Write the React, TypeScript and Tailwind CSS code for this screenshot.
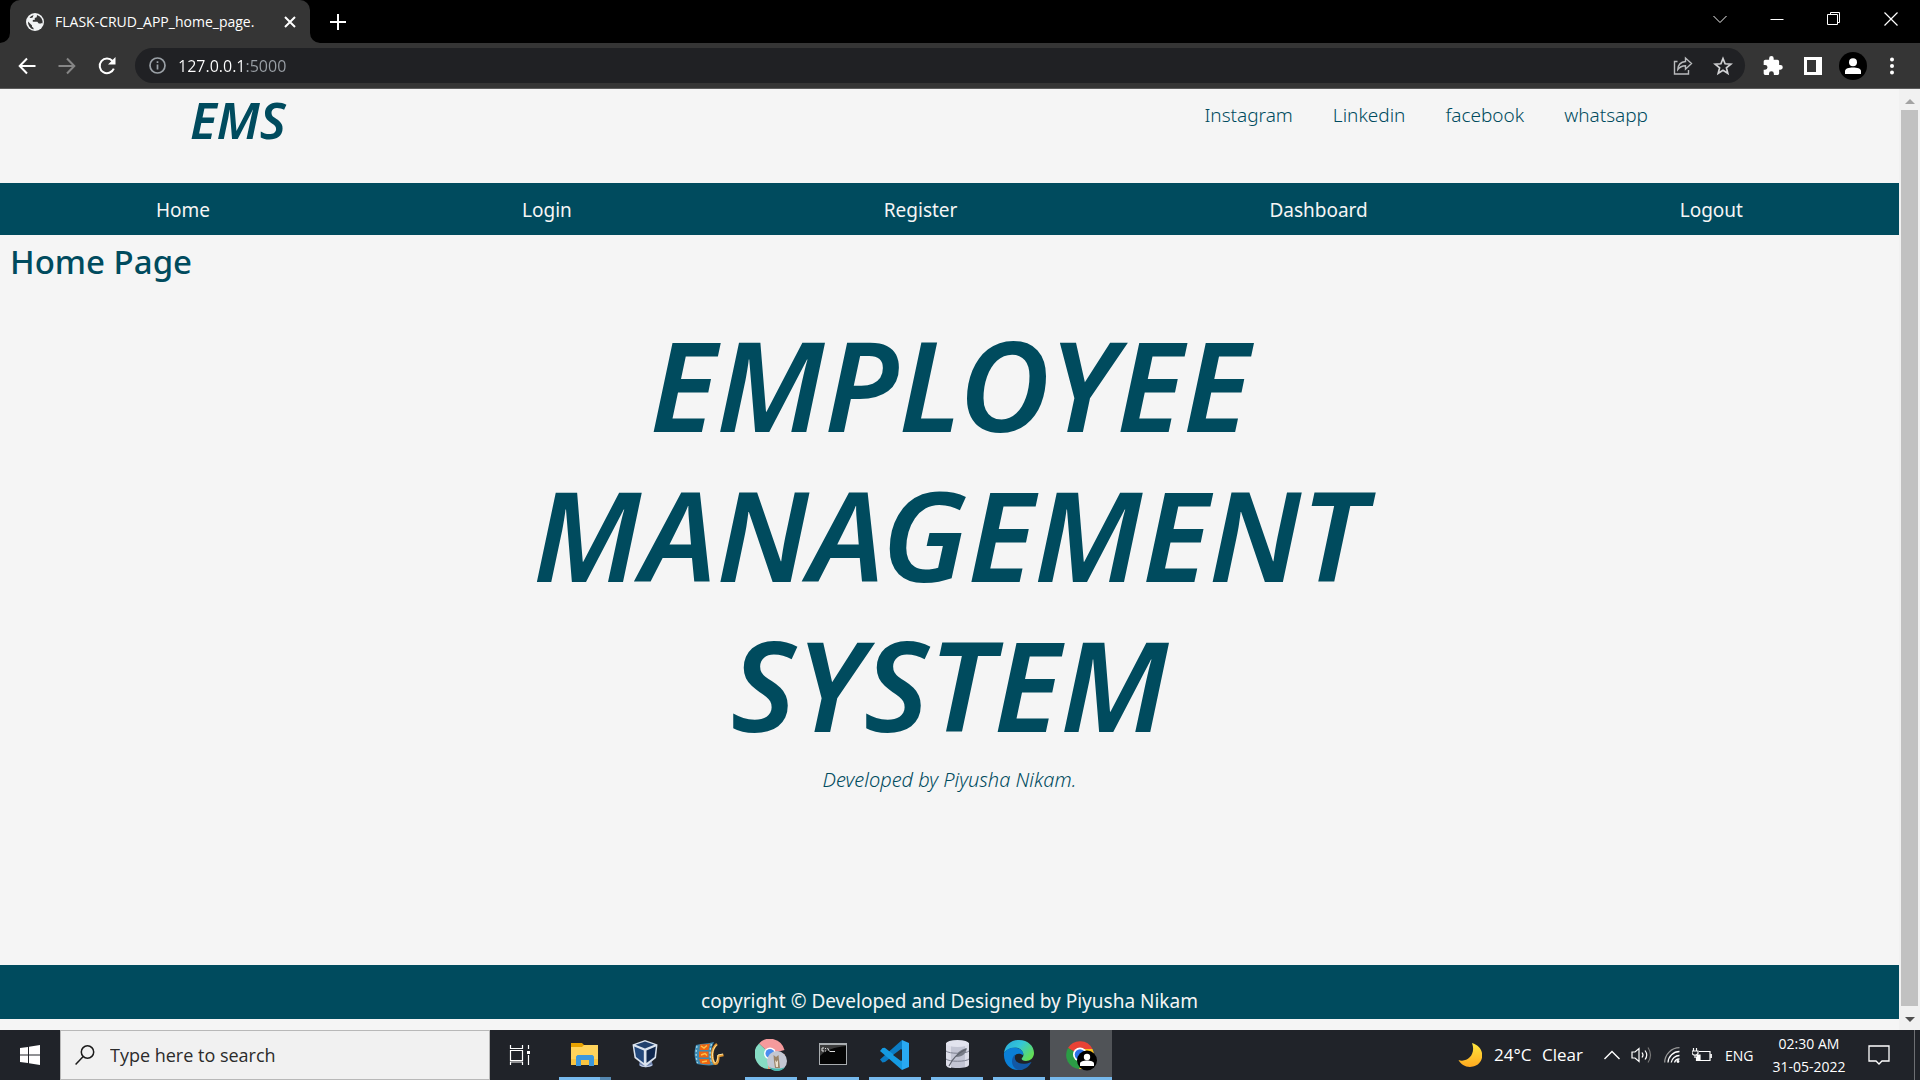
import type { ReactNode } from "react";

const social = ["Instagram", "Linkedin", "facebook", "whatsapp"];
const sections = ["Home", "Login", "Register", "Dashboard", "Logout"];

function Globe() {
  return (
    <svg viewBox="0 0 18 18" className="h-[18px] w-[18px] shrink-0">
      <circle cx="9" cy="9" r="9" fill="#f1f3f4" />
      <path d="M2 8.500 6 12.500v1.200l1.500 1.300v1.500A7.600 7.600 0 0 1 2 8.500zM11 2l-.3 2.200-2 .8.2 1.700-2.100.3v1.800h4.500l1.500 1.800h2.300l.8-.6.6.5a7.500 7.500 0 0 0-5.500-8.500zM3.500 4.800 5 3.200 7.500 2l-.8 2.400L5 5z" fill="#353535" />
    </svg>
  );
}

function ToolButton({ label, className = "", children }: { label: string; className?: string; children: ReactNode }) {
  return (
    <button aria-label={label} className={`flex shrink-0 items-center justify-center ${className}`}>
      {children}
    </button>
  );
}

function TabStrip() {
  return (
    <div className="flex h-[43px] shrink-0 bg-black">
      <div className="relative ml-[10px] flex w-[300px] items-center rounded-t-[10px] bg-[#353535] pl-4 pr-[14px]">
        <svg viewBox="0 0 10 10" className="absolute -left-[10px] bottom-0 h-[10px] w-[10px]"><path d="M10 0v10H0A10 10 0 0 0 10 0z" fill="#353535" /></svg>
        <svg viewBox="0 0 10 10" className="absolute -right-[10px] bottom-0 h-[10px] w-[10px]"><path d="M0 0v10h10A10 10 0 0 1 0 0z" fill="#353535" /></svg>
        <Globe />
        <span className="ml-[11px] flex-1 whitespace-nowrap text-[14px] text-white">FLASK-CRUD_APP_home_page.</span>
        <ToolButton label="Close tab">
          <svg viewBox="0 0 12 12" className="h-3 w-3" stroke="#fff" strokeWidth="2"><path d="m1 1 10 10M11 1 1 11" /></svg>
        </ToolButton>
      </div>
      <ToolButton label="New tab" className="ml-5 w-4">
        <svg viewBox="0 0 16 16" className="h-4 w-4" stroke="#fff" strokeWidth="2"><path d="M8 0v16M0 8h16" /></svg>
      </ToolButton>
      <div className="ml-auto mr-px flex h-[37px]">
        <ToolButton label="Search tabs" className="w-[57px]">
          <svg viewBox="0 0 14 14" className="h-[14px] w-[14px]" fill="none" stroke="#f0f0f0"><path d="m.5 4 6.500 6.500L13.500 4" /></svg>
        </ToolButton>
        <ToolButton label="Minimize" className="w-[57px]">
          <svg viewBox="0 0 14 14" className="h-[14px] w-[14px]" stroke="#fff"><path d="M.5 7.500h13" /></svg>
        </ToolButton>
        <ToolButton label="Restore" className="w-[57px]">
          <svg viewBox="0 0 14 14" className="h-[14px] w-[14px]" fill="none" stroke="#fff"><path d="M.5 2.500h10v10H.5zM3.500 2.500V.5h9v10h-2" /></svg>
        </ToolButton>
        <ToolButton label="Close" className="w-[57px]">
          <svg viewBox="0 0 14 14" className="h-[14px] w-[14px]" stroke="#fff" strokeWidth="1.200"><path d="m.5.5 13 13M13.500.5l-13 13" /></svg>
        </ToolButton>
      </div>
    </div>
  );
}

function Toolbar() {
  return (
    <div className="flex h-[46px] shrink-0 items-center border-b border-[#5c5c5c] bg-[#353535] pl-[18px] pr-5">
      <ToolButton label="Back" className="w-[18px]">
        <svg viewBox="0 0 18 18" className="h-[18px] w-[18px]" fill="none" stroke="#fff" strokeWidth="2"><path d="M17.500 9H2M9 1.500 1.700 9 9 16.500" /></svg>
      </ToolButton>
      <ToolButton label="Forward" className="ml-[22px] w-[18px]">
        <svg viewBox="0 0 18 18" className="h-[18px] w-[18px]" fill="none" stroke="#868686" strokeWidth="2"><path d="M.5 9H16M9 1.500 16.300 9 9 16.500" /></svg>
      </ToolButton>
      <ToolButton label="Reload" className="ml-[21px] w-5">
        <svg viewBox="0 0 20 20" className="h-5 w-5" fill="none" stroke="#fff" strokeWidth="2"><path d="M16.800 12.600A7.300 7.300 0 1 1 15.500 5L17 6.500" /><path d="M18.500 1v7.500H11z" fill="#fff" stroke="none" /></svg>
      </ToolButton>
      <div className="ml-[18px] mr-px flex h-[35px] flex-1 items-center rounded-full bg-[#202124] pl-[14px] pr-[12px]">
        <ToolButton label="View site information">
          <svg viewBox="0 0 17 17" className="h-[17px] w-[17px]" fill="none" stroke="#9aa0a6" strokeWidth="1.700"><circle cx="8.500" cy="8.500" r="7.500" /><path d="M8.500 7.500v5M8.500 4.300V6" /></svg>
        </ToolButton>
        <input
          aria-label="Address"
          defaultValue="127.0.0.1:5000"
          className="ml-3 min-w-0 flex-1 bg-[linear-gradient(to_right,#fff_67px,#9aa0a6_67px)] bg-clip-text text-[16px] text-transparent outline-none"
        />
        <ToolButton label="Share">
          <svg viewBox="0 0 20 20" className="h-5 w-5" fill="none" stroke="#b9bbbd" strokeWidth="1.400"><path d="M4.500 5.500H1.500v12.500h14V14" /><path d="M12.500 2v3.500C7.500 6 5 9.500 4.800 13.500c2-2.800 4.300-3.800 7.700-3.800v3.500L18.500 7.600z" /></svg>
        </ToolButton>
        <ToolButton label="Bookmark this tab" className="ml-5">
          <svg viewBox="0 0 20 20" className="h-5 w-5" fill="none" stroke="#d0d1d3" strokeWidth="1.700"><path d="m10 2.500 2.100 5.300 5.700.4-4.400 3.600 1.400 5.500-4.800-3-4.800 3 1.400-5.500-4.400-3.600 5.700-.4z" /></svg>
        </ToolButton>
      </div>
      <ToolButton label="Extensions" className="ml-[17px]">
        <svg viewBox="1.500 1 21.500 22" className="h-5 w-5" fill="#fff"><path d="M20.500 11H19V7c0-1.100-.9-2-2-2h-4V3.500a2.500 2.500 0 0 0-5 0V5H4c-1.100 0-2 .9-2 2v3.800h1.500a2.700 2.700 0 0 1 0 5.400H2V20c0 1.100.9 2 2 2h3.800v-1.500a2.700 2.700 0 0 1 5.400 0V22H17c1.100 0 2-.9 2-2v-4h1.500a2.500 2.500 0 0 0 0-5z" /></svg>
      </ToolButton>
      <ToolButton label="Side panel" className="ml-[21px]">
        <svg viewBox="0 0 18 18" className="h-[18px] w-[18px]"><path fill="#fff" fillRule="evenodd" d="M0 0h18v18H0zM3 3v12h9V3z" /></svg>
      </ToolButton>
      <ToolButton label="Profile" className="ml-[17px] h-7 w-7 rounded-full bg-black">
        <svg viewBox="0 0 16 16" className="h-4 w-4" fill="#fff"><circle cx="8" cy="4.300" r="4" /><path d="M0 16v-3c0-2.500 4-3.500 8-3.500s8 1 8 3.500v3z" /></svg>
      </ToolButton>
      <ToolButton label="Menu" className="ml-[17px] w-4">
        <svg viewBox="0 0 4 18" className="h-[18px] w-1" fill="#fff"><circle cx="2" cy="2.500" r="2" /><circle cx="2" cy="9" r="2" /><circle cx="2" cy="15.500" r="2" /></svg>
      </ToolButton>
    </div>
  );
}

function Page() {
  return (
    <div className="flex min-w-0 flex-1 flex-col font-['Noto_Sans',sans-serif] text-[#004b5e]">
      <header className="flex h-[94px] shrink-0 justify-between pl-[10%] pr-[251px]">
        <h1 className="pt-px text-[50px] font-semibold italic leading-[60px]">EMS</h1>
        <ul className="flex gap-10 pt-[11px] text-[19px] font-light leading-[30px]">
          {social.map((s) => <li key={s}><a href="#">{s}</a></li>)}
        </ul>
      </header>
      <nav className="flex h-[52px] shrink-0 items-center justify-around bg-[#004b5e] pt-[2px] text-[19px] text-[#f5f5f5]">
        {sections.map((s) => <a key={s} href="#">{s}</a>)}
      </nav>
      <main className="flex-1">
        <h2 className="px-[10px] pt-[5px] text-[33px] font-medium leading-[44px]">Home Page</h2>
        <div className="pt-[25px] text-center">
          <h2 className="text-[125px] font-semibold italic leading-[150px]">EMPLOYEE<br />MANAGEMENT<br />SYSTEM</h2>
          <p className="pt-[6px] text-[20px] font-light italic leading-[30px]">Developed by Piyusha Nikam.</p>
        </div>
      </main>
      <footer className="mb-[11px] h-[54px] shrink-0 bg-[#004b5e] pt-[21px] text-center text-[19px] leading-[30px] text-[#f5f5f5]">
        copyright © Developed and Designed by Piyusha Nikam
      </footer>
    </div>
  );
}

function Scrollbar() {
  return (
    <div className="flex w-[21px] shrink-0 flex-col items-center bg-[#f1f1f1]">
      <div className="flex h-[21px] items-center pt-1"><svg viewBox="0 0 10 5" className="h-[5px] w-[10px]"><path d="M5 0l5 5H0z" fill="#a3a3a3" /></svg></div>
      <div className="w-[17px] flex-1 bg-[#c1c1c1]" />
      <div className="flex h-6 items-center pt-[3px]"><svg viewBox="0 0 10 5" className="h-[5px] w-[10px]"><path d="M0 0h10L5 5z" fill="#505050" /></svg></div>
    </div>
  );
}

function Person() {
  return <><circle cx="22" cy="21.500" r="10" fill="#000" /><circle cx="22" cy="18" r="3.200" fill="#fff" /><path d="M15 27v-2.500c0-2 3.500-3 7-3s7 1 7 3V27z" fill="#fff" /></>;
}

const apps: { name: string; state: "idle" | "open" | "multi" | "active"; icon: ReactNode }[] = [
  {
    name: "File Explorer",
    state: "multi",
    icon: <><path d="M2 4h11l2 2v3H2z" fill="#e6a100" /><path d="M2 8h11l2-2h14v20H2z" fill="#ffd35b" /><path d="M2 20h27v6H2z" fill="#f9c440" /><path d="M7 27v-9.500L8.500 16h15l1.500 1.500V27h-5v-6h-8v6z" fill="#3c97dc" /></>,
  },
  {
    name: "VirtualBox",
    state: "idle",
    icon: <><path d="m9 21 5 1 6-1 2 5c-2 3-12 3-14 0z" fill="#6f83ad" /><path d="M9 26c3 2 8 2 12 0" stroke="#c3cfe3" strokeWidth="1.200" /><path d="M14 1 26.500 5.500 25 19l-10.500 8.500L3.500 19 1.500 5.500z" fill="#dbe4ef" /><path d="m14 2.500 9.500 3.200L14 9.500 4.500 5.700z" fill="#20406d" /><path d="m3.200 7.500 9.600 4v12.600L5 18z" fill="#22487c" /><path d="m24.800 7.500-9.300 4v12.600l8-6.100z" fill="#10284e" /></>,
  },
  {
    name: "Movie Maker",
    state: "idle",
    icon: <><path d="M3 6c7-2 12-1 18-3-4 7-3 15 0 23-6 1-11 0-17-1C1 19 1 12 3 6z" fill="#3f8bb3" /><path d="M7 5.500c4-.5 7 0 10-1L15.500 11h-9zM6 12.500h9.500v6H6zM6 20h10l1.500 5c-4 .5-7 0-10-.5z" fill="#ee6512" /><path d="m8 7 3 2 3-2.500M8 16l4-1.500 2 2M9 23l5-1" stroke="#ffc04a" strokeWidth="1.500" /><path d="M4 7c-1.200 5-1.200 11 .5 17M18.500 5c-2 6-2 12 .5 20" stroke="#a5d8ea" strokeWidth="1.300" strokeDasharray="2 2" /><path d="M24 5c-6 5-6 14-2.500 19.500 4 1.500 3.500-5 4-7.500l5-1" stroke="#e2962f" strokeWidth="2.600" /><path d="M23.500 6c-5 5-5 13-2 18 3 0 3-5 3.500-8l5-1" stroke="#fbe3a0" /></>,
  },
  {
    name: "Chrome profile",
    state: "open",
    icon: <><path d="M15 15 4 4.500A15 15 0 0 1 29.500 11z" fill="#f59a9c" /><path d="M15 15 4 4.500A15 15 0 0 0 13 30l6-10z" fill="#86dcc4" /><path d="M15 15h14.500a15 15 0 0 1-16.500 15z" fill="#ff9c6c" /><circle cx="15" cy="14.500" r="6" fill="#fff" /><circle cx="15" cy="14.500" r="4.500" fill="#4a8cf0" /><circle cx="22" cy="22" r="10" fill="#c3c7d3" /><path d="M14 28a10 10 0 0 0 16 0c-4 2-11 2-16 0z" fill="#46b8ae" /><path d="m18.500 16 2.500 2 2.500-2 .5 5 1 8h-5l-1-7z" fill="#9b8468" /><path d="m20 21 1.500 2 1.500-2v7h-2z" fill="#ede1cf" /></>,
  },
  {
    name: "Command Prompt",
    state: "open",
    icon: <><path d="M2 4h28v22H2z" fill="#a9adb0" /><path d="M3 6h26v19H3z" fill="#050505" /><path d="M3 6h26v1C18 8 8 11 3 17z" fill="#3c3c3c" /><path d="M7 9H5v3h2M8.500 9v1m0 1.500v1M10.500 9l2 3.500M13 12.500h5" fill="none" stroke="#ddd" /></>,
  },
  {
    name: "Visual Studio Code",
    state: "open",
    icon: <><path d="M23 1 30 4v24l-7 3z" fill="#29a9f2" /><path d="M23 1 1 20.500l2.500 3L6 23 23 10z" fill="#0b7cc4" /><path d="m3.500 9 2.300-.2L23 22v9L1 12z" fill="#159be2" /><path d="M22 10v12l-8-6z" fill="#25292e" /></>,
  },
  {
    name: "DB Browser",
    state: "open",
    icon: <><path d="M5 4v21c0 3 5 4 11.500 4S28 28 28 25V4z" fill="#c3c5d4" /><path d="M5 4v21c0 3 3 4 5 4V7zM28 4v21c0 2-2 3-4 3V7z" fill="#dcdde8" /><ellipse cx="16.500" cy="4.500" rx="11.500" ry="3.500" fill="#e2e3ee" /><path d="M5 12c3 3 20 3 23 0M5 20c3 3 20 3 23 0" stroke="#7d8190" /><path d="M15 18c1-5 4-7 11-9-1 5-4 9-11 9z" fill="#777b86" /><path d="M8 27c4-8 8-12 17-17" stroke="#5f636e" strokeWidth="1.200" /></>,
  },
  {
    name: "Microsoft Edge",
    state: "open",
    icon: <><defs><linearGradient id="edge-wave" x1="0" y1="0" x2="1" y2=".6"><stop offset="0" stopColor="#27a7dc" /><stop offset=".5" stopColor="#34c6d8" /><stop offset="1" stopColor="#63dd56" /></linearGradient></defs><path d="M1 14C2 6 8 1 16 1c9 0 15 6 15 13 0 5-4 8-8 8-4 0-5-2-4-3 3-3 1-8-4-10-6-1-11 1-14 5z" fill="url(#edge-wave)" /><path d="M1 14C4 9 9 8 14 9c4 .7 7 4 6 7-7-4-11 2-8 8 2 4 6 6 9 6C10 34 0 26 1 14z" fill="#0a7fd6" /><path d="M12.500 15c-3 7 4 13 16 8-3 6-8 8-13 8C8 29 7 19 12.500 15z" fill="#1258a5" /></>,
  },
  {
    name: "Google Chrome",
    state: "active",
    icon: <><path d="M15 16 3 9A14 14 0 0 1 27.500 10H15z" fill="#e94235" /><path d="M15 16 3 9a14 14 0 0 0 11 21l5-9z" fill="#2b9c45" /><path d="M15 10h12.500A14 14 0 0 1 14 30l6-11z" fill="#fcc31e" /><circle cx="15" cy="15.500" r="7" fill="#fff" /><circle cx="15" cy="15.500" r="5.300" fill="#2b72e8" /><Person /></>,
  },
];

function Taskbar() {
  return (
    <div className="flex h-[50px] shrink-0 items-stretch bg-[#202329] text-white">
      <ToolButton label="Start" className="w-[60px]">
        <svg viewBox="0 0 20 20" className="h-5 w-5" fill="#fff"><path d="m0 3 8-1.100v7.600H0zM9 1.700 20 0v9.500H9zM0 10.500h8v7.600L0 17zM9 10.500h11V20L9 18.300z" /></svg>
      </ToolButton>
      <label className="flex w-[430px] items-center border border-[#b8b8b8] bg-[#f1f1f1] pl-[14px]">
        <svg viewBox="0 0 20 20" className="h-5 w-5 shrink-0" fill="none" stroke="#1b1b1b" strokeWidth="1.500"><circle cx="12.500" cy="7" r="6.200" /><path d="M8.200 11.500.6 19.400" /></svg>
        <input aria-label="Search" placeholder="Type here to search" className="ml-[15px] min-w-0 flex-1 bg-transparent text-[18px] placeholder:text-[#2b2b2b] outline-none" />
      </label>
      <ToolButton label="Task view" className="mr-1 w-[60px]">
        <svg viewBox="0 0 22 22" className="h-[22px] w-[22px]" fill="none" stroke="#fff" strokeWidth="1.200"><path d="M1.500 1v3.500h12V1M1.500 6.500h12v10h-12zM1.500 21v-3h12v3M19.500 1v4M19.500 11v10" /><path d="M18 7h3v3h-3z" fill="#fff" stroke="none" /></svg>
      </ToolButton>
      {apps.map((a) => (
        <button key={a.name} aria-label={a.name} className={`relative flex w-[62px] shrink-0 items-center justify-center ${a.state === "active" ? "bg-[#505357]" : ""}`}>
          <svg viewBox="0 0 32 32" className="h-8 w-8" fill="none">{a.icon}</svg>
          {a.state === "open" && <span className="absolute inset-x-[5px] bottom-0 h-[3px] bg-[#76b9ed]" />}
          {a.state === "active" && <span className="absolute inset-x-0 bottom-0 h-[3px] bg-[#76b9ed]" />}
          {a.state === "multi" && <span className="absolute inset-x-[5px] bottom-0 h-[3px] border-r-[11px] border-[#5487b0] bg-[#76b9ed]" />}
        </button>
      ))}
      <div className="ml-auto flex items-center">
        <button className="flex items-center whitespace-nowrap text-[17px]">
          <svg viewBox="0 0 24 24" className="mr-[12px] h-6 w-6"><defs><linearGradient id="moon" x1="0" y1="0" x2="0" y2="1"><stop offset="0" stopColor="#ffe83f" /><stop offset="1" stopColor="#ffa91f" /></linearGradient></defs><path d="M14 0c14 4 13 21 1 23.500C9 25 3 22 .5 17c8 3 18-5 13.500-17z" fill="url(#moon)" /></svg>
          <span className="w-[48px] text-left">24°C</span>
          <span className="w-[62px] text-left">Clear</span>
        </button>
        <ToolButton label="Show hidden icons">
          <svg viewBox="0 0 16 10" className="h-[10px] w-4" fill="none" stroke="#fff" strokeWidth="1.400"><path d="m.5 9 7.500-7.500L15.500 9" /></svg>
        </ToolButton>
        <ToolButton label="Volume" className="ml-[11px]">
          <svg viewBox="0 0 21 18" className="h-[18px] w-[21px]" fill="none" stroke="#fff" strokeWidth="1.200"><path d="M1 6h3l4-3.500v13L4 12H1zM11 6.500q2 2.500 0 5M14 4.500q3.500 4.500 0 9" /><path d="M17 1.500q5 7.500 0 15" stroke="#777" /></svg>
        </ToolButton>
        <ToolButton label="Network" className="ml-[12px]">
          <svg viewBox="0 0 16 16" className="h-4 w-4" fill="none" strokeWidth="1.300"><path d="M.7 15.500A15 15 0 0 1 15.500.7" stroke="#999" /><path d="M4 15.500A11.500 11.500 0 0 1 15.500 4.500M7.200 15.500a8.300 8.300 0 0 1 8.300-7M10.500 15.500a5 5 0 0 1 5-3.500" stroke="#fff" /><circle cx="14" cy="14.500" r="1.400" fill="#fff" /></svg>
        </ToolButton>
        <ToolButton label="Battery" className="ml-[12px]">
          <svg viewBox="0 0 20 14" className="h-[14px] w-5" fill="none" stroke="#fff" strokeWidth="1.200"><path d="M7 3.500h11v9H4.500V9M19.300 6v4M1.500 0v3M4.500 0v3M0 3h6v2.500L4.500 7h-3L0 5.500zM3 7v3" /><path d="M5 7h3v5H5z" fill="#fff" /></svg>
        </ToolButton>
        <button className="ml-[13px] w-[33px] text-left text-[14px]">ENG</button>
        <button className="ml-[8px] w-[86px] whitespace-nowrap text-center text-[14px] leading-[23px]">02:30 AM<br />31-05-2022</button>
        <ToolButton label="Notifications" className="ml-[16px]">
          <svg viewBox="0 0 22 22" className="h-[22px] w-[22px]" fill="none" stroke="#fff" strokeWidth="1.300"><path d="M1 2h20v15h-7l-3 3-3-3H1z" /></svg>
        </ToolButton>
        <button aria-label="Show desktop" className="ml-[24px] h-[50px] w-[6px] border-l border-[#6d6f73]" />
      </div>
    </div>
  );
}

export default function App() {
  return (
    <div className="flex h-screen flex-col overflow-hidden bg-[#f5f5f5] font-['Open_Sans','Noto_Sans',sans-serif]">
      <TabStrip />
      <Toolbar />
      <div className="flex min-h-0 flex-1">
        <Page />
        <Scrollbar />
      </div>
      <Taskbar />
    </div>
  );
}
